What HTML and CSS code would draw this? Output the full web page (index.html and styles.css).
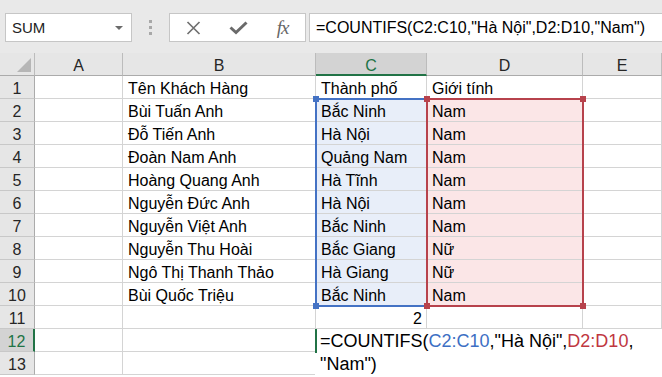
FILE: index.html
```html
<!DOCTYPE html>
<html lang="vi">
<head>
  <meta charset="UTF-8" />
  <meta name="viewport" content="width=device-width, initial-scale=1.0">
  <title>COUNTIFS</title>
  <link rel="stylesheet" href="styles.css">
</head>
<body>

  <!-- Formula bar -->
  <div class="formula-bar">
    <div class="name-box">
      <span>SUM</span>
      <span class="caret"></span>
    </div>
    <div class="grip"><i></i><i></i><i></i></div>
    <div class="fx-buttons">
      <span class="fx-btn">
        <svg width="15" height="14" viewBox="0 0 15 14"><path d="M1.5 1 L13.5 13 M13.5 1 L1.5 13" stroke="#707070" stroke-width="1.7" fill="none"/></svg>
      </span>
      <span class="fx-btn">
        <svg width="19" height="14" viewBox="0 0 19 14"><path d="M1.5 6.5 L7 11.5 L17.5 1.5" stroke="#6a6a6a" stroke-width="3" fill="none"/></svg>
      </span>
      <span class="fx-btn fx">fx</span>
    </div>
    <div class="formula-input">=COUNTIFS(C2:C10,"Hà Nội",D2:D10,"Nam")</div>
  </div>

  <!-- Sheet -->
  <div class="sheet">
    <div class="corner"></div>
    <div class="ch">A</div>
    <div class="ch">B</div>
    <div class="ch active">C</div>
    <div class="ch">D</div>
    <div class="ch">E</div>

    <div class="rh">1</div>
    <div class="cell"></div>
    <div class="cell">Tên Khách Hàng</div>
    <div class="cell">Thành phố</div>
    <div class="cell">Giới tính</div>
    <div class="cell"></div>

    <div class="rh">2</div>
    <div class="cell"></div>
    <div class="cell">Bùi Tuấn Anh</div>
    <div class="cell in-c">Bắc Ninh</div>
    <div class="cell in-d">Nam</div>
    <div class="cell"></div>

    <div class="rh">3</div>
    <div class="cell"></div>
    <div class="cell">Đỗ Tiến Anh</div>
    <div class="cell in-c">Hà Nội</div>
    <div class="cell in-d">Nam</div>
    <div class="cell"></div>

    <div class="rh">4</div>
    <div class="cell"></div>
    <div class="cell">Đoàn Nam Anh</div>
    <div class="cell in-c">Quảng Nam</div>
    <div class="cell in-d">Nam</div>
    <div class="cell"></div>

    <div class="rh">5</div>
    <div class="cell"></div>
    <div class="cell">Hoàng Quang Anh</div>
    <div class="cell in-c">Hà Tĩnh</div>
    <div class="cell in-d">Nam</div>
    <div class="cell"></div>

    <div class="rh">6</div>
    <div class="cell"></div>
    <div class="cell">Nguyễn Đức Anh</div>
    <div class="cell in-c">Hà Nội</div>
    <div class="cell in-d">Nam</div>
    <div class="cell"></div>

    <div class="rh">7</div>
    <div class="cell"></div>
    <div class="cell">Nguyễn Việt Anh</div>
    <div class="cell in-c">Bắc Ninh</div>
    <div class="cell in-d">Nam</div>
    <div class="cell"></div>

    <div class="rh">8</div>
    <div class="cell"></div>
    <div class="cell">Nguyễn Thu Hoài</div>
    <div class="cell in-c">Bắc Giang</div>
    <div class="cell in-d">Nữ</div>
    <div class="cell"></div>

    <div class="rh">9</div>
    <div class="cell"></div>
    <div class="cell">Ngô Thị Thanh Thảo</div>
    <div class="cell in-c">Hà Giang</div>
    <div class="cell in-d">Nữ</div>
    <div class="cell"></div>

    <div class="rh">10</div>
    <div class="cell"></div>
    <div class="cell">Bùi Quốc Triệu</div>
    <div class="cell in-c">Bắc Ninh</div>
    <div class="cell in-d">Nam</div>
    <div class="cell"></div>

    <div class="rh">11</div>
    <div class="cell"></div>
    <div class="cell"></div>
    <div class="cell num">2</div>
    <div class="cell"></div>
    <div class="cell"></div>

    <div class="rh active">12</div>
    <div class="cell"></div>
    <div class="cell"></div>
    <div class="cell"></div>
    <div class="cell"></div>
    <div class="cell"></div>

    <div class="rh">13</div>
    <div class="cell"></div>
    <div class="cell"></div>
    <div class="cell"></div>
    <div class="cell"></div>
    <div class="cell"></div>

    <!-- Range highlights drawn over the cells -->
    <div class="range range-c">
      <span class="handle tl"></span>
      <span class="handle bl"></span>
    </div>
    <div class="range range-d">
      <span class="handle tl"></span>
      <span class="handle tr"></span>
      <span class="handle bl"></span>
      <span class="handle br"></span>
    </div>

    <!-- In-cell editor for C12 -->
    <div class="editor">=COUNTIFS(<span class="ref-c">C2:C10</span>,"Hà Nội",<span class="ref-d">D2:D10</span>,<br>"Nam")</div>
  </div>

</body>
</html>
```

FILE: styles.css
```css
/* General reset */
html, body {
  margin: 0;
  padding: 0;
  width: 662px;
  height: 377px;
  overflow: hidden;
  font-family: "Liberation Sans", Arial, sans-serif;
  background: #fff;
  color: #000;
}

/* Formula bar */
.formula-bar {
  height: 53px;
  box-sizing: border-box;
  padding-top: 13px;
  background: #e9e9e9;
  display: flex;
  align-items: flex-start;
}

.name-box {
  width: 127px;
  height: 29px;
  box-sizing: border-box;
  margin-left: 5px;
  background: #fff;
  border: 1px solid #c6c6c6;
  display: flex;
  align-items: center;
  justify-content: space-between;
  padding: 0 8px 0 6px;
  font-size: 15px;
  color: #222;
}

.caret {
  width: 0;
  height: 0;
  border-left: 4px solid transparent;
  border-right: 4px solid transparent;
  border-top: 4px solid #6b6b6b;
}

.grip {
  width: 37px;
  height: 29px;
  display: flex;
  flex-direction: column;
  align-items: center;
  justify-content: center;
  gap: 3px;
}

.grip i {
  width: 3px;
  height: 3px;
  background: #a8a8a8;
}

.fx-buttons {
  width: 137px;
  height: 29px;
  box-sizing: border-box;
  background: #fff;
  border: 1px solid #c6c6c6;
  display: flex;
  align-items: center;
  padding-left: 1px;
}

.fx-btn {
  width: 45px;
  display: flex;
  justify-content: center;
  align-items: center;
}

.fx {
  font-family: "Liberation Serif", "Times New Roman", serif;
  font-style: italic;
  font-size: 19px;
  color: #666;
  letter-spacing: -1px;
}

.formula-input {
  flex: 1;
  height: 29px;
  box-sizing: border-box;
  margin-left: 3px;
  background: #fff;
  border: 1px solid #c6c6c6;
  border-right: none;
  padding-left: 6px;
  font-size: 16px;
  line-height: 27px;
  white-space: nowrap;
  overflow: hidden;
}

/* Sheet grid */
.sheet {
  position: relative;
  display: grid;
  grid-template-columns: 35px 88px 193px 111px 156px 1fr;
  grid-auto-rows: 23px;
  font-size: 16px;
}

.corner,
.ch,
.rh,
.cell {
  box-sizing: border-box;
  border-right: 1px solid #d4d4d4;
  border-bottom: 1px solid #d4d4d4;
  white-space: nowrap;
  overflow: hidden;
}

.corner {
  background: #e6e6e6;
  border-right-color: #bcbcbc;
  border-bottom-color: #ababab;
  position: relative;
}

.corner::after {
  content: "";
  position: absolute;
  right: 3px;
  bottom: 3px;
  width: 0;
  height: 0;
  border-left: 14px solid transparent;
  border-bottom: 14px solid #b6b6b6;
}

.ch {
  background: #e6e6e6;
  border-right-color: #bcbcbc;
  border-bottom-color: #ababab;
  text-align: center;
  color: #262626;
  padding-top: 3px;
  line-height: 20px;
}

.ch.active {
  background: #d3d3d3;
  color: #217346;
  border-bottom: 2px solid #217346;
}

.rh {
  background: #e6e6e6;
  border-right-color: #ababab;
  border-bottom-color: #c8c8c8;
  text-align: center;
  color: #262626;
  padding-top: 3px;
  line-height: 20px;
}

.rh.active {
  background: #d3d3d3;
  color: #217346;
  border-right: 2px solid #217346;
}

.cell {
  padding: 3px 4px 0 5px;
  line-height: 20px;
}

.cell.num {
  text-align: right;
  padding-right: 4px;
}

.in-c {
  background: #e8eef9;
  padding-left: 5px;
}

.in-d {
  background: #fbe6e7;
  padding-left: 5px;
}

/* Formula reference ranges */
.range {
  position: absolute;
  top: 45px;
  height: 209px;
  box-sizing: border-box;
  border: 2px solid;
  pointer-events: none;
}

.range-c {
  left: 315px;
  width: 113px;
  border-color: #4472c4;
}

.range-d {
  left: 426px;
  width: 158px;
  border-color: #b7424c;
}

.handle {
  position: absolute;
  width: 6px;
  height: 6px;
}

.range-c .handle {
  background: #4472c4;
}

.range-d .handle {
  background: #b7424c;
}

.handle.tl { left: -4px; top: -4px; }
.handle.tr { right: -4px; top: -4px; }
.handle.bl { left: -4px; bottom: -4px; }
.handle.br { right: -4px; bottom: -4px; }

/* In-cell editor */
.editor {
  position: absolute;
  left: 315px;
  top: 276px;
  right: 0;
  height: 48px;
  box-sizing: border-box;
  background: #fff;
  padding: 1px 0 0 5px;
  font-size: 18px;
  line-height: 23px;
  white-space: nowrap;
}

.editor::before {
  content: "";
  position: absolute;
  left: 0;
  top: 0;
  width: 2px;
  height: 24px;
  background: #217346;
}

.ref-c {
  color: #3d6fc4;
}

.ref-d {
  color: #c0373f;
}
```
